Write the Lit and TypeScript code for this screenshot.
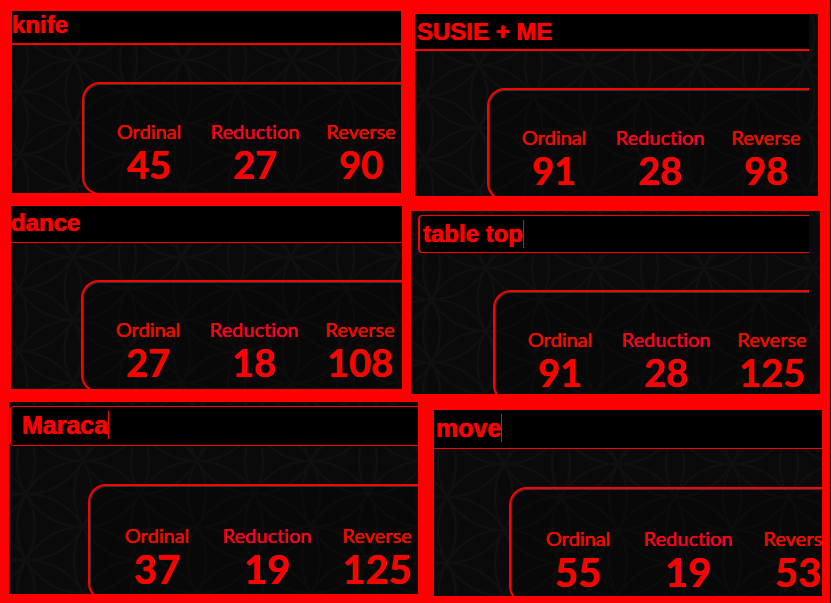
import { LitElement, html, svg, css } from "lit";
import { customElement, property } from "lit/decorators.js";

interface Phrase {
  id: string;
  text: string;
  ordinal: number;
  reduction: number;
  reverse: number;
  caret: boolean;
  node: [number, number];
  tile: [number, number];
}

const SMALL: [number, number] = [109, 63];
const LARGE: [number, number] = [114, 66];

const ROWS: Phrase[][] = [
  [
    { id: "knife", text: "knife", ordinal: 45, reduction: 27, reverse: 90, caret: false, node: [62, 49], tile: SMALL },
    { id: "susie", text: "SUSIE + ME", ordinal: 91, reduction: 28, reverse: 98, caret: false, node: [64, 51], tile: SMALL },
  ],
  [
    { id: "dance", text: "dance", ordinal: 27, reduction: 18, reverse: 108, caret: false, node: [62, 51], tile: SMALL },
    { id: "table", text: "table top", ordinal: 91, reduction: 28, reverse: 125, caret: true, node: [75, 57], tile: SMALL },
  ],
  [
    { id: "maraca", text: "Maraca", ordinal: 37, reduction: 19, reverse: 125, caret: true, node: [74, 59], tile: LARGE },
    { id: "move", text: "move", ordinal: 55, reduction: 19, reverse: 53, caret: true, node: [70, 54], tile: LARGE },
  ],
];

/* Centres of the overlapping circles that reach into one pattern tile. */
const CENTRES = [
  [0, 0], [109, 0], [0, 63], [109, 63], [54.5, 31.5],
  [54.5, -31.5], [54.5, 94.5], [-54.5, 31.5], [163.5, 31.5],
];

@customElement("phrase-panel")
export class PhrasePanel extends LitElement {
  @property({ attribute: false }) phrase!: Phrase;

  static styles = css`
    :host {
      display: block;
      position: relative;
      overflow: hidden;
      background: #0a0a0a;
      color: #f00;
      min-width: 0;
    }
    .pattern {
      position: absolute;
      inset: 0;
      width: 100%;
      height: 100%;
    }
    .ring { fill: none; stroke: #101010; stroke-width: 2; }
    .view {
      position: relative;
      overflow: hidden;
      margin-right: var(--strip, 0);
      padding-top: var(--top, 0);
    }
    .entry {
      display: flex;
      align-items: center;
      background: #000;
      margin-left: var(--entry-left, 0);
      padding: var(--entry-pad);
      border: 0 solid #f00;
      border-width: var(--entry-border);
      border-radius: var(--entry-radius, 0);
    }
    .text {
      field-sizing: content;
      min-width: 0;
      margin: 0;
      padding: 0;
      border: 0;
      outline: 0;
      background: none;
      color: inherit;
      height: 28px;
      font: bold var(--entry-size, 24px) / 28px "Liberation Sans", Arial, sans-serif;
      text-shadow: 0 0 0 #f00, 0 0 1px #f00;
    }
    .caret { width: 1px; height: 28px; background: #f00; }
    .scores {
      display: grid;
      grid-template-columns: repeat(3, var(--column, 106px));
      margin: var(--box-gap, 37px) 0 var(--box-cut) var(--box-left);
      padding: var(--box-top, 35px) 0 9px 12px;
      border: 2px solid #f00;
      border-right: 0;
      border-radius: 18px 0 0 18px;
      background: rgba(0, 0, 0, 0.2);
      box-shadow: inset 1px 1px 0 #333;
      font-family: Lato, sans-serif;
      font-variant-ligatures: none;
      text-align: center;
    }
    .name {
      font-size: 20px;
      line-height: 25px;
      text-shadow: 0 0 0 #f00, 0 0 1px #060;
    }
    .value {
      margin: 0;
      font-size: var(--value-size, 38px);
      line-height: var(--value-line, 40px);
      font-weight: bold;
      text-shadow: 0 0 0 #f00, 0 0 1px #060;
    }
    .blue .name, .blue .value { text-shadow: 0 0 0 #f00, 0 0 1px #22c; }
  `;

  render() {
    const p = this.phrase;
    return html`
      <svg class="pattern" aria-hidden="true">
        <defs>
          <pattern id="flower" patternUnits="userSpaceOnUse" viewBox="0 0 109 63"
            x=${p.node[0]} y=${p.node[1]} width=${p.tile[0]} height=${p.tile[1]}>
            ${CENTRES.map(([x, y]) => svg`<circle class="ring" cx=${x} cy=${y} r="63" />`)}
          </pattern>
        </defs>
        <rect width="100%" height="100%" fill="url(#flower)" />
      </svg>
      <div class="view">
        <div class="entry">
          <input class="text" type="text" aria-label="Phrase" .value=${p.text} />
          ${p.caret ? html`<span class="caret"></span>` : ""}
        </div>
        <dl class="scores">
          <div><dt class="name">Ordinal</dt><dd class="value">${p.ordinal}</dd></div>
          <div class="blue"><dt class="name">Reduction</dt><dd class="value">${p.reduction}</dd></div>
          <div><dt class="name">Reverse</dt><dd class="value">${p.reverse}</dd></div>
        </dl>
      </div>
    `;
  }
}

@customElement("app-root")
export class AppRoot extends LitElement {
  static styles = css`
    :host {
      display: block;
      box-sizing: border-box;
      min-height: 100vh;
      background: #f00;
      border-right: 1px solid #111;
    }
    .row { display: grid; align-items: start; }
    .row-0 { grid-template-columns: 389fr 403fr; gap: 14px; padding: 11px 12px 0 12px; }
    .row-1 { grid-template-columns: 391fr 409fr; gap: 9px; padding: 10px 10px 0 11px; }
    .row-2 { grid-template-columns: 409fr 388fr; gap: 16px; padding: 8px 8px 7px 9px; }

    .knife { --entry-pad: 0 0 4px; --entry-border: 0 0 2px; --box-left: 70px; --box-cut: -2px; }
    .susie {
      margin-top: 3px; --strip: 9px; --entry-pad: 4px 0 3px 2px; --entry-border: 0 0 2px;
      --box-left: 72px; --box-cut: -5px;
    }
    .dance { --entry-pad: 3px 0 5px; --entry-border: 0 0 1px; --box-left: 70px; --box-cut: -4px; }
    .table {
      margin-top: 5px; --strip: 11px; --top: 4px; --entry-left: 7px; --entry-pad: 4px 0 4px 3px;
      --entry-border: 1px 0 1px 2px; --entry-radius: 4px 0 0 4px; --box-left: 82px; --box-cut: -9px;
    }
    .row-2 {
      --entry-size: 25px; --value-size: 40px; --value-line: 42px; --column: 110px;
      --box-gap: 38px; --box-top: 37px;
    }
    .maraca {
      --top: 4px; --entry-left: 1px; --entry-pad: 4px 0 6px 11px; --entry-border: 1px 0 1px 1px;
      --entry-radius: 4px 0 0 4px; --box-left: 79px; --box-cut: -7px;
    }
    .move {
      margin-top: 8px; --entry-pad: 4px 0 6px 2px; --entry-border: 0 0 1px;
      --box-left: 75px; --box-cut: -8px;
    }
  `;

  render() {
    return html`${ROWS.map(
      (row, i) => html`<div class="row row-${i}">
        ${row.map((p) => html`<phrase-panel class=${p.id} .phrase=${p}></phrase-panel>`)}
      </div>`
    )}`;
  }
}
